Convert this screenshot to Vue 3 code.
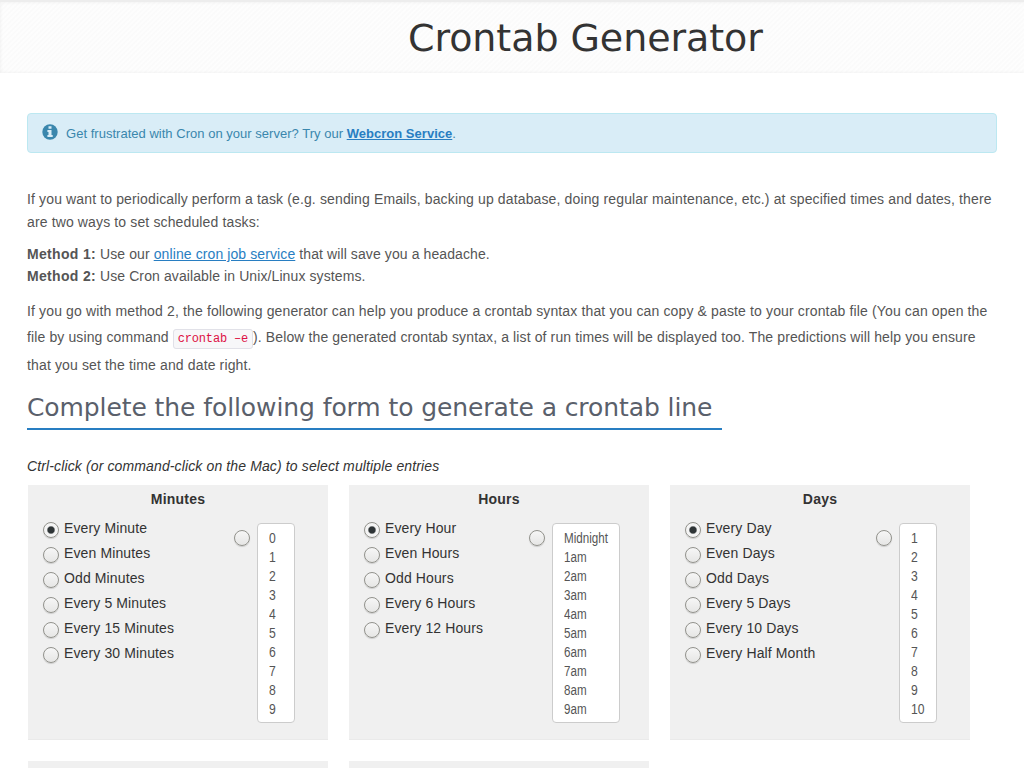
<script setup>
const range = (from, to) => Array.from({ length: to - from + 1 }, (_, i) => String(from + i))

const groups = [
  {
    name: 'Minutes',
    options: ['Every Minute', 'Even Minutes', 'Odd Minutes', 'Every 5 Minutes', 'Every 15 Minutes', 'Every 30 Minutes'],
    entries: range(0, 9),
  },
  {
    name: 'Hours',
    options: ['Every Hour', 'Even Hours', 'Odd Hours', 'Every 6 Hours', 'Every 12 Hours'],
    entries: ['Midnight', ...range(1, 9).map((h) => h + 'am')],
  },
  {
    name: 'Days',
    options: ['Every Day', 'Even Days', 'Odd Days', 'Every 5 Days', 'Every 10 Days', 'Every Half Month'],
    entries: range(1, 10),
  },
]
</script>

<template>
  <div class="page">
    <header class="banner"><h1>Crontab Generator</h1></header>
    <main>
      <div class="notice">
        <svg class="info" viewBox="0 0 16 16" width="16" height="16">
          <circle cx="8" cy="8" r="7.7" fill="#3a87ad" />
          <path d="M6.5 2.3h3v2.4h-3zM5.4 6h4.1v5h1.2v2H5.4v-2h1.1V8H5.4z" fill="#d9edf7" />
        </svg>
        <span class="notice-text">Get frustrated with Cron on your server? Try our <a href="#"><b>Webcron Service</b></a>.</span>
      </div>
      <p class="intro">If you want to periodically perform a task (e.g. sending Emails, backing up database, doing regular maintenance, etc.) at specified times and dates, there<br />are two ways to set scheduled tasks:</p>
      <p class="methods"><b>Method 1:</b> Use our <a href="#">online cron job service</a> that will save you a headache.<br /><b>Method 2:</b> Use Cron available in Unix/Linux systems.</p>
      <p class="details">
        <span>If you go with method 2, the following generator can help you produce a crontab syntax that you can copy &amp; paste to your crontab file (You can open the</span>
        <span class="with-code">file by using command <code>crontab –e</code>). Below the generated crontab syntax, a list of run times will be displayed too. The predictions will help you ensure</span>
        <span>that you set the time and date right.</span>
      </p>
      <h2>Complete the following form to generate a crontab line</h2>
      <p class="hint">Ctrl-click (or command-click on the Mac) to select multiple entries</p>
      <div class="cards">
        <section v-for="g in groups" :key="g.name" class="card">
          <h3>{{ g.name }}</h3>
          <div class="body">
            <ul class="options">
              <li v-for="(o, i) in g.options" :key="o">
                <span class="radio" :class="{ on: i === 0 }"></span><span>{{ o }}</span>
              </li>
            </ul>
            <div class="pick" :class="{ wide: g.name === 'Hours' }">
              <span class="radio"></span>
              <ul class="list">
                <li v-for="e in g.entries" :key="e">{{ e }}</li>
              </ul>
            </div>
          </div>
        </section>
        <section class="card"></section>
        <section class="card"></section>
      </div>
    </main>
  </div>
</template>

<style>
body { background: #fff; }
</style>

<style scoped>
.page {
  box-sizing: border-box;
  width: 1024px;
  height: 768px;
  overflow: hidden;
  font: 14px/22px "Liberation Sans", Arial, sans-serif;
  letter-spacing: 0.12px;
  color: #555;
}
h1, h2, h3, p, ul { margin: 0; padding: 0; font-weight: 400; }
ul { list-style: none; }
a { color: #287ec2; text-decoration: underline; }
.banner {
  box-sizing: border-box;
  width: 1030px;
  height: 73px;
  padding-left: 408px;
  border-top: 2px solid #ededed;
  background: repeating-linear-gradient(135deg, #fafafa 0, #fefefe 1.77px, #fafafa 3.54px);
  box-shadow: inset 0 0 4px rgba(0, 0, 0, 0.06);
}
h1 {
  font: 38px/72px "DejaVu Sans", sans-serif;
  letter-spacing: -0.07px;
  color: #333;
  white-space: nowrap;
}
main { padding: 40px 27px 0; }
.notice {
  box-sizing: border-box;
  height: 40px;
  padding: 0 14px;
  display: flex;
  align-items: center;
  gap: 8px;
  border: 1px solid #bce8f1;
  border-radius: 4px;
  background: #d9edf7;
  color: #3a87ad;
  font-size: 13px;
  letter-spacing: 0.022px;
}
.notice-text { padding-top: 2px; }
.info { margin-top: -3px; }
.intro { margin-top: 35px; line-height: 23px; letter-spacing: 0.134px; white-space: nowrap; }
.methods { margin-top: 9px; letter-spacing: 0.1px; white-space: nowrap; }
.methods b { letter-spacing: 0.32px; }
.details { margin-top: 11px; letter-spacing: 0.138px; white-space: nowrap; }
.details > span { display: block; height: 27px; line-height: 27px; }
.details > .with-code { height: 25px; line-height: 25px; margin-bottom: 2px; letter-spacing: 0.118px; }
code {
  padding: 2px 4px;
  border: 1px solid #e1e1e8;
  border-radius: 3px;
  background: #f7f7f9;
  color: #dd1144;
  font: 12px "Liberation Mono", monospace;
  letter-spacing: -0.18px;
}
h2 {
  box-sizing: border-box;
  width: 695px;
  height: 45px;
  margin-top: 6px;
  border-bottom: 2px solid #287ec2;
  font: 25px/46px "DejaVu Sans", sans-serif;
  letter-spacing: -0.09px;
  color: #5a606b;
  white-space: nowrap;
}
.hint { margin-top: 25px; color: #333; font-style: italic; letter-spacing: 0.127px; }
.cards {
  display: grid;
  grid-template-columns: repeat(3, 300px);
  gap: 21px;
  margin: 8px 0 0 1px;
}
.card {
  box-sizing: border-box;
  height: 255px;
  background: #f0f0f0;
  border-bottom: 1px solid #eaeaea;
  color: #333;
}
h3 { font: bold 14px/28px "Liberation Sans", Arial, sans-serif; letter-spacing: 0.2px; text-align: center; }
.body {
  display: flex;
  justify-content: space-between;
  padding: 3px 33px 0 15px;
}
.options li { display: flex; height: 25px; line-height: 25px; gap: 5px; white-space: nowrap; }
.radio {
  box-sizing: border-box;
  flex: none;
  width: 16px;
  height: 16px;
  margin-top: 6px;
  border: 1px solid #92928c;
  border-radius: 50%;
  background: linear-gradient(#f6f6f6, #e6e6e5);
  box-shadow: 0 1px 1px rgba(0, 0, 0, 0.15);
}
.radio.on { background: radial-gradient(circle, #2e3436 0 3px, #f4f4f4 4.4px); }
.pick { display: flex; gap: 7px; padding-top: 7px; }
.pick .radio { margin-top: 7px; }
.list {
  box-sizing: border-box;
  width: 38px;
  height: 200px;
  padding: 5px 11px;
  border: 1px solid #ccc;
  border-radius: 4px;
  background: #fff;
  color: #555;
  font: 14px/19px "Liberation Sans", Arial, sans-serif;
  letter-spacing: 0;
}
.list li { width: max-content; transform: scaleX(0.87); transform-origin: 0 0; }
.wide { margin-right: -4px; }
.wide .list { width: 68px; }
.wide .list li { transform: scaleX(0.83); }
</style>
